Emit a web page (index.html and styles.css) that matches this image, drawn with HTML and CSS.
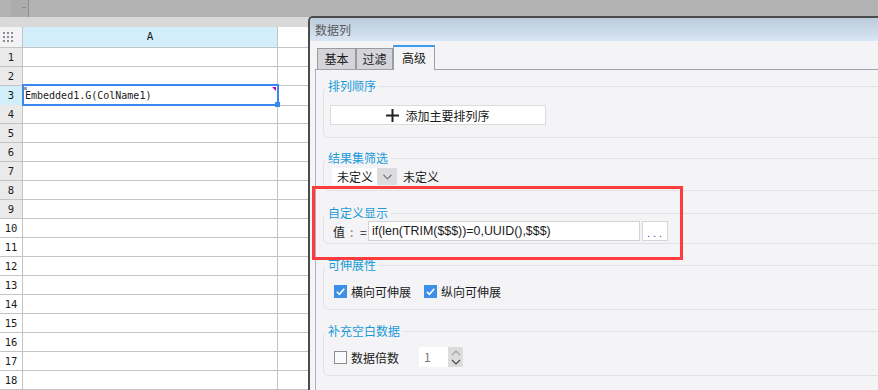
FILE: index.html
```html
<!DOCTYPE html>
<html lang="zh-CN">
<head>
  <meta charset="UTF-8" />
  <title>数据列</title>
  <link rel="stylesheet" href="styles.css">
</head>
<body>
  <div class="app">
    <div class="toolbar"><span class="tb-btn"><span class="tb-dash"></span></span></div>
    <div class="strip"></div>

    <div class="sheet">
      <div class="row head">
        <div class="rh corner">
          <svg width="10" height="10" viewBox="0 0 10 10">
            <g fill="#8c8c8c">
              <rect x="0" y="0" width="2" height="2"/><rect x="4" y="0" width="2" height="2"/><rect x="8" y="0" width="2" height="2"/>
              <rect x="0" y="4" width="2" height="2"/><rect x="4" y="4" width="2" height="2"/><rect x="8" y="4" width="2" height="2"/>
              <rect x="0" y="8" width="2" height="2"/><rect x="4" y="8" width="2" height="2"/><rect x="8" y="8" width="2" height="2"/>
            </g>
          </svg>
        </div>
        <div class="ca col-a">A</div>
        <div class="cb"></div>
      </div>
      <div class="row"><div class="rh">1</div><div class="ca"></div><div class="cb"></div></div>
      <div class="row"><div class="rh">2</div><div class="ca"></div><div class="cb"></div></div>
      <div class="row"><div class="rh active">3</div>
        <div class="ca selected">Embedded1.G(ColName1)
          <span class="sel-box"></span>
          <span class="sel-mark"></span>
          <span class="sel-corner"></span>
          <span class="sel-handle"></span>
        </div>
        <div class="cb"></div>
      </div>
      <div class="row"><div class="rh">4</div><div class="ca"></div><div class="cb"></div></div>
      <div class="row"><div class="rh">5</div><div class="ca"></div><div class="cb"></div></div>
      <div class="row"><div class="rh">6</div><div class="ca"></div><div class="cb"></div></div>
      <div class="row"><div class="rh">7</div><div class="ca"></div><div class="cb"></div></div>
      <div class="row"><div class="rh">8</div><div class="ca"></div><div class="cb"></div></div>
      <div class="row"><div class="rh">9</div><div class="ca"></div><div class="cb"></div></div>
      <div class="row"><div class="rh plain">10</div><div class="ca"></div><div class="cb"></div></div>
      <div class="row"><div class="rh plain">11</div><div class="ca"></div><div class="cb"></div></div>
      <div class="row"><div class="rh plain">12</div><div class="ca"></div><div class="cb"></div></div>
      <div class="row"><div class="rh plain">13</div><div class="ca"></div><div class="cb"></div></div>
      <div class="row"><div class="rh plain">14</div><div class="ca"></div><div class="cb"></div></div>
      <div class="row"><div class="rh plain">15</div><div class="ca"></div><div class="cb"></div></div>
      <div class="row"><div class="rh plain">16</div><div class="ca"></div><div class="cb"></div></div>
      <div class="row"><div class="rh plain">17</div><div class="ca"></div><div class="cb"></div></div>
      <div class="row"><div class="rh plain">18</div><div class="ca"></div><div class="cb"></div></div>
    </div>

    <div class="dialog">
      <div class="dlg-title">数据列</div>
      <div class="dlg-body">
        <div class="tabs">
          <div class="tab t1">基本</div>
          <div class="tab t2">过滤</div>
          <div class="tab t3 current">高级</div>
        </div>
        <div class="panel">
          <fieldset class="grp g1">
            <legend>排列顺序</legend>
            <div class="grp-body">
              <button class="add-btn">
                <svg width="13" height="13" viewBox="0 0 13 13"><path d="M6.5 0v13M0 6.5h13" stroke="#222" stroke-width="2"/></svg>
                <span>添加主要排列序</span>
              </button>
            </div>
          </fieldset>

          <fieldset class="grp g2">
            <legend>结果集筛选</legend>
            <div class="grp-body line">
              <div class="combo">
                <span class="combo-val">未定义</span>
                <span class="combo-arrow">
                  <svg width="9" height="6" viewBox="0 0 9 6"><path d="M0.5 0.8l4 4 4-4" fill="none" stroke="#666" stroke-width="1.1"/></svg>
                </span>
              </div>
              <span class="combo-text">未定义</span>
            </div>
          </fieldset>

          <fieldset class="grp g3">
            <legend>自定义显示</legend>
            <div class="grp-body line">
              <span class="lbl">值</span><span class="colon">:</span><span class="eq">=</span>
              <div class="expr">if(len(TRIM($$$))=0,UUID(),$$$)</div>
              <button class="more">...</button>
            </div>
          </fieldset>

          <fieldset class="grp g4">
            <legend>可伸展性</legend>
            <div class="grp-body line">
              <span class="chk on">
                <svg width="13" height="13" viewBox="0 0 13 13"><path d="M2.8 6.8l2.6 2.6 4.9-5.6" fill="none" stroke="#fff" stroke-width="1.6"/></svg>
              </span>
              <span class="chk-text">横向可伸展</span>
              <span class="chk on second">
                <svg width="13" height="13" viewBox="0 0 13 13"><path d="M2.8 6.8l2.6 2.6 4.9-5.6" fill="none" stroke="#fff" stroke-width="1.6"/></svg>
              </span>
              <span class="chk-text">纵向可伸展</span>
            </div>
          </fieldset>

          <fieldset class="grp g5">
            <legend>补充空白数据</legend>
            <div class="grp-body line">
              <span class="chk"></span>
              <span class="chk-text">数据倍数</span>
              <div class="spin">
                <span class="spin-val">1</span>
                <span class="spin-arrows">
                  <svg width="10" height="6" viewBox="0 0 10 6"><path d="M1 5l4-4 4 4" fill="none" stroke="#a0a0a0" stroke-width="1.1"/></svg>
                  <svg width="10" height="6" viewBox="0 0 10 6"><path d="M1 1l4 4 4-4" fill="none" stroke="#444" stroke-width="1.1"/></svg>
                </span>
              </div>
            </div>
          </fieldset>
        </div>
      </div>
    </div>

    <div class="callout"></div>
  </div>
</body>
</html>
```

FILE: styles.css
```css
* {
  box-sizing: border-box;
}

body {
  margin: 0;
  padding: 0;
  font-family: "Liberation Sans", "Noto Sans CJK SC", sans-serif;
  font-size: 12px;
  color: #1a1a1a;
  background-color: #fff;
}

.app {
  position: relative;
  width: 878px;
  height: 390px;
  overflow: hidden;
}

/* top toolbar */
.toolbar {
  height: 17px;
  background-color: #b3b3b3;
  padding-left: 11px;
}

.tb-btn {
  display: block;
  position: relative;
  width: 18px;
  height: 17px;
  background-color: #acacac;
  border-right: 1px solid #8f8f8f;
}

.tb-dash {
  position: absolute;
  left: 11px;
  top: 7px;
  width: 4px;
  height: 1px;
  background-color: #8a8a8a;
}

.strip {
  height: 10px;
  background-color: #d9d9d9;
}

/* spreadsheet */
.sheet {
  font-family: "DejaVu Sans Mono", "Liberation Mono", monospace;
  font-size: 10px;
}

.row {
  display: grid;
  grid-template-columns: 23px 255px 1fr;
  height: 19px;
}

.row.head {
  height: 21px;
}

.rh, .ca, .cb {
  border-bottom: 1px solid #c4c4c4;
  line-height: 18px;
}

.rh {
  border-right: 1px solid #c4c4c4;
  background-color: #eaeaea;
  text-align: center;
  font-size: 10.5px;
}

.rh.plain { background-color: #fff; }
.rh.active { background-color: #d1eefa; }

.rh.corner {
  background-color: #f3f3f5;
  display: flex;
  align-items: center;
  padding-left: 3px;
}

.ca {
  border-right: 1px solid #c4c4c4;
}

.col-a {
  background-color: #d1eefa;
  text-align: center;
  line-height: 20px;
  font-size: 11px;
}

.selected {
  position: relative;
  padding-left: 2px;
  line-height: 19px;
}

.sel-box {
  position: absolute;
  left: -1px;
  top: -2px;
  width: 257px;
  height: 22px;
  border: 2px solid #3a87ee;
}

.sel-mark {
  position: absolute;
  left: 1px;
  top: 1px;
  width: 3px;
  height: 3px;
  background-color: #9a9a9a;
}

.sel-corner {
  position: absolute;
  left: 249px;
  top: 1px;
  width: 0;
  height: 0;
  border-top: 4px solid #b400d0;
  border-left: 4px solid transparent;
}

.sel-handle {
  position: absolute;
  left: 252px;
  top: 16px;
  width: 5px;
  height: 5px;
  background-color: #3a87ee;
}

/* dialog */
.dialog {
  position: absolute;
  left: 308px;
  top: 16px;
  width: 590px;
  height: 380px;
  border-top: 2px solid #4b4b4b;
  border-left: 2px solid #4b4b4b;
  border-top-left-radius: 5px;
  background-color: #f4f4f6;
  font-family: "Noto Sans CJK SC", "Liberation Sans", sans-serif;
}

.dlg-title {
  height: 23px;
  line-height: 23px;
  padding-left: 5px;
  color: #5a5a5a;
  background: linear-gradient(#bacbdb, #d9e6f3);
  border-top-left-radius: 3px;
}

.dlg-body {
  padding: 4px 0 0 5px;
}

.tabs {
  display: flex;
  align-items: flex-end;
  height: 25px;
  padding-left: 2px;
  border-bottom: 1px solid #9aa2b0;
}

.tab {
  height: 21px;
  line-height: 19px;
  text-align: center;
  background-color: #d5d5d9;
  border: 1px solid #9b9b9f;
  border-bottom: none;
}

.t1 { width: 39px; }
.t2 { width: 37px; }
.t3 { width: 42px; }

.tab.current {
  height: 25px;
  margin-bottom: -1px;
  line-height: 22px;
  background-color: #f4f4f6;
  border-color: #9aa2b0;
  border-top: 2px solid #3c9be8;
}

.panel {
  height: 330px;
  border-left: 1px solid #a9b2c2;
  padding: 8px 0 0 7px;
}

.grp {
  margin: 0;
  padding: 0;
  border: 1px solid #e1e1e5;
  border-radius: 6px;
  min-width: 0;
}

.grp legend {
  margin-left: 1px;
  padding: 0 3px;
  line-height: 16px;
  color: #1b9ad8;
}

.grp-body {
  padding-left: 6px;
}

.grp-body.line {
  display: flex;
  align-items: center;
}

.g1 .grp-body { padding-top: 11px; padding-bottom: 12px; }
.g2 { margin-top: 12px; }
.g2 .grp-body { padding: 2px 0 5px 8px; }
.g3 { margin-top: 14px; }
.g3 .grp-body { padding: 0 0 2px 9px; }
.g4 { margin-top: 13px; }
.g4 .grp-body { padding: 8px 0 8px 10px; height: 36px; }
.g5 { margin-top: 13px; }
.g5 .grp-body { padding: 8px 0 8px 10px; }

.add-btn {
  display: flex;
  align-items: center;
  justify-content: center;
  gap: 6px;
  width: 216px;
  height: 20px;
  padding: 0;
  background-color: #fff;
  border: 1px solid #dcdcdc;
  font: inherit;
  color: #1a1a1a;
}

.combo {
  display: flex;
  height: 17px;
}

.combo-val {
  width: 45px;
  padding-left: 5px;
  line-height: 17px;
  background-color: #fff;
}

.combo-arrow {
  width: 20px;
  display: flex;
  align-items: center;
  justify-content: center;
  background-color: #dcdcde;
}

.combo-text {
  margin-left: 6px;
}

.lbl {
  flex: none;
  width: 15px;
}

.colon {
  flex: none;
  width: 12px;
  padding-left: 2px;
  color: #777;
}

.eq {
  flex: none;
  width: 8px;
}

.expr {
  flex: none;
  width: 272px;
  height: 20px;
  line-height: 18px;
  padding-left: 3px;
  background-color: #fff;
  border: 1px solid #d3d3d3;
  font-family: "Liberation Sans", sans-serif;
  font-size: 12.4px;
}

.more {
  flex: none;
  width: 26px;
  height: 20px;
  margin-left: 2px;
  padding: 3px 0 0 0;
  background-color: #fff;
  border: 1px solid #d6d6d6;
  color: #8e24aa;
  font-family: "Liberation Sans", sans-serif;
  font-size: 11px;
  letter-spacing: 3px;
  text-indent: 2px;
}

.chk {
  display: flex;
  flex: none;
  width: 13px;
  height: 13px;
  border: 1px solid #8c8c8c;
  background-color: #fafafa;
}

.chk.on {
  border: none;
  background-color: #3d8fe8;
}

.chk.second {
  margin-left: 13px;
}

.chk-text {
  margin-left: 4px;
}

.spin {
  display: flex;
  height: 20px;
  margin-left: 20px;
}

.spin-val {
  width: 29px;
  padding-left: 5px;
  line-height: 20px;
  color: #777;
  background-color: #fff;
}

.spin-arrows {
  width: 15px;
  display: flex;
  flex-direction: column;
  align-items: center;
  justify-content: center;
  gap: 3px;
  background-color: #dcdcdc;
}

/* red highlight frame drawn over the dialog */
.callout {
  position: absolute;
  left: 312px;
  top: 186px;
  width: 371px;
  height: 74px;
  border: 3px solid #ff3c3c;
}
```
